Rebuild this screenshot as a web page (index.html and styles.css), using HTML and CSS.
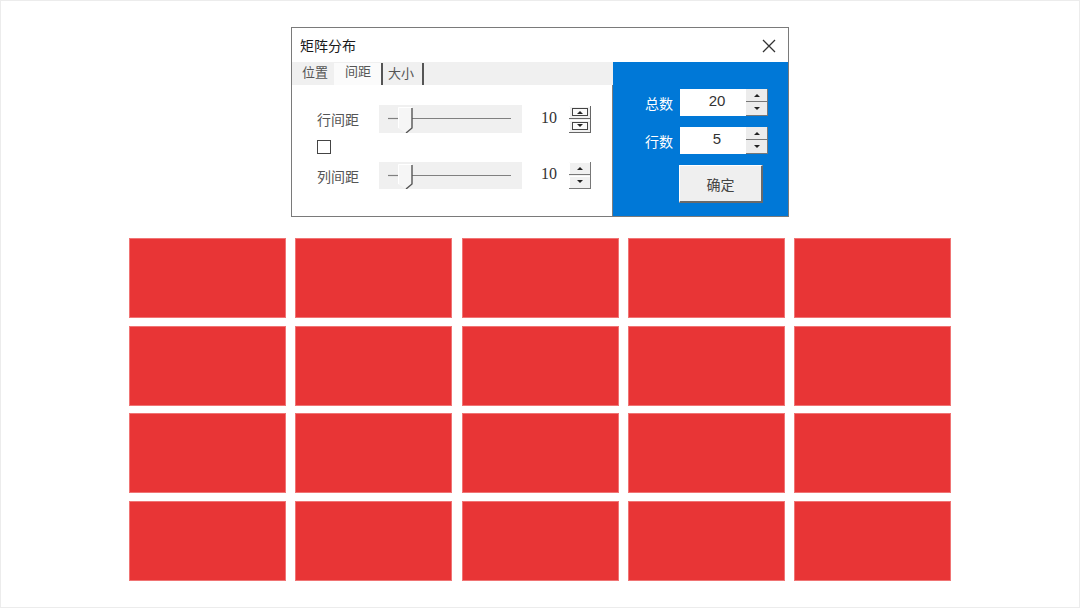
FILE: index.html
```html
<!DOCTYPE html>
<html lang="zh-CN">
<head>
    <meta charset="UTF-8">
    <meta name="viewport" content="width=device-width, initial-scale=1.0">
    <title>矩阵分布</title>
    <link rel="stylesheet" href="styles.css">
</head>
<body>
    <div class="dialog">
        <div class="title-bar">
            <span class="title">矩阵分布</span>
            <svg class="close" width="14" height="14" viewBox="0 0 14 14">
                <path d="M1 1 L13 13 M13 1 L1 13" stroke="#333" stroke-width="1.3" fill="none"/>
            </svg>
        </div>
        <div class="dialog-body">
            <div class="left-panel">
                <div class="tabs">
                    <span class="tab">位置</span>
                    <span class="tab active">间距</span>
                    <span class="tab last">大小</span>
                </div>
                <div class="tab-content">
                    <div class="spacing-row">
                        <span class="row-label">行间距</span>
                        <svg class="slider" width="143" height="28" viewBox="0 0 143 28">
                            <line x1="9" y1="13.5" x2="19" y2="13.5" stroke="#808080" stroke-width="1.2"/>
                            <line x1="33" y1="13.5" x2="132" y2="13.5" stroke="#808080" stroke-width="1.2"/>
                            <path d="M19 2 H33 V23 L27 28 L19 23 Z" fill="#f6f6f6"/>
                            <path d="M19.5 23 V2.5 H33" stroke="#ffffff" fill="none"/>
                            <path d="M33 3 V23 L27 28" stroke="#555" stroke-width="1.4" fill="none"/>
                        </svg>
                        <span class="num-box">10</span>
                        <svg class="spin" width="22" height="27" viewBox="0 0 22 27">
                            <rect x="0" y="0" width="22" height="27" fill="#f0f0f0"/>
                            <path d="M0.5 12.5 V0.5 H21" stroke="#fff" fill="none"/>
                            <path d="M21.5 0 V13 M0 12.5 H22" stroke="#666" fill="none"/>
                            <rect x="3.5" y="2.5" width="15" height="7" stroke="#444" fill="#fafafa"/>
                            <path d="M8 8 H14 L11 5 Z" fill="#222"/>
                            <path d="M0.5 26 V14.5 H21" stroke="#fff" fill="none"/>
                            <path d="M21.5 13 V27 M0 26.5 H22" stroke="#666" fill="none"/>
                            <rect x="3.5" y="16.5" width="15" height="7" stroke="#444" fill="#fafafa"/>
                            <path d="M8 18 H14 L11 21 Z" fill="#222"/>
                        </svg>
                    </div>
                    <span class="checkbox"></span>
                    <div class="spacing-row">
                        <span class="row-label">列间距</span>
                        <svg class="slider" width="143" height="27" viewBox="0 0 143 27">
                            <line x1="9" y1="13.5" x2="19" y2="13.5" stroke="#808080" stroke-width="1.2"/>
                            <line x1="33" y1="13.5" x2="132" y2="13.5" stroke="#808080" stroke-width="1.2"/>
                            <path d="M19 2 H33 V22 L27 27 L19 22 Z" fill="#f6f6f6"/>
                            <path d="M19.5 22 V2.5 H33" stroke="#ffffff" fill="none"/>
                            <path d="M33 3 V22 L27 27" stroke="#555" stroke-width="1.4" fill="none"/>
                        </svg>
                        <span class="num-box">10</span>
                        <svg class="spin" width="22" height="27" viewBox="0 0 22 27">
                            <rect x="0" y="0" width="22" height="27" fill="#f0f0f0"/>
                            <path d="M0.5 12.5 V0.5 H21" stroke="#fff" fill="none"/>
                            <path d="M21.5 0 V13 M0 12.5 H22" stroke="#777" fill="none"/>
                            <path d="M8 8 H14 L11 5 Z" fill="#222"/>
                            <path d="M0.5 26 V14.5 H21" stroke="#fff" fill="none"/>
                            <path d="M21.5 13 V27 M0 26.5 H22" stroke="#777" fill="none"/>
                            <path d="M8 18 H14 L11 21 Z" fill="#222"/>
                        </svg>
                    </div>
                </div>
            </div>
            <div class="blue-panel">
                <div class="count-row">
                    <span class="count-label">总数</span>
                    <span class="count-input">20</span>
                    <svg class="spin" width="22" height="27" viewBox="0 0 22 27">
                        <rect x="0" y="0" width="22" height="27" fill="#ececec"/>
                        <path d="M21.5 0 V13 M0 12.5 H22" stroke="#777" fill="none"/>
                        <path d="M8 8 H14 L11 5 Z" fill="#222"/>
                        <path d="M21.5 13 V27 M0 26.5 H22" stroke="#777" fill="none"/>
                        <path d="M8 18 H14 L11 21 Z" fill="#222"/>
                    </svg>
                </div>
                <div class="count-row">
                    <span class="count-label">行数</span>
                    <span class="count-input">5</span>
                    <svg class="spin" width="22" height="27" viewBox="0 0 22 27">
                        <rect x="0" y="0" width="22" height="27" fill="#ececec"/>
                        <path d="M21.5 0 V13 M0 12.5 H22" stroke="#777" fill="none"/>
                        <path d="M8 8 H14 L11 5 Z" fill="#222"/>
                        <path d="M21.5 13 V27 M0 26.5 H22" stroke="#777" fill="none"/>
                        <path d="M8 18 H14 L11 21 Z" fill="#222"/>
                    </svg>
                </div>
                <button class="ok-button">确定</button>
            </div>
        </div>
    </div>

    <div class="matrix">
        <div class="cell"></div><div class="cell"></div><div class="cell"></div><div class="cell"></div><div class="cell"></div>
        <div class="cell"></div><div class="cell"></div><div class="cell"></div><div class="cell"></div><div class="cell"></div>
        <div class="cell"></div><div class="cell"></div><div class="cell"></div><div class="cell"></div><div class="cell"></div>
        <div class="cell"></div><div class="cell"></div><div class="cell"></div><div class="cell"></div><div class="cell"></div>
    </div>
</body>
</html>
```

FILE: styles.css
```css
body {
    margin: 0;
    width: 1080px;
    height: 608px;
    box-sizing: border-box;
    border: 1px solid #ececec;
    padding-top: 26px;
    background-color: #ffffff;
    font-family: "Noto Sans CJK SC", "Noto Sans", sans-serif;
    display: flex;
    flex-direction: column;
    align-items: center;
}

/* ventana */
.dialog {
    width: 498px;
    height: 190px;
    box-sizing: border-box;
    border: 1px solid #7a7a7a;
    background-color: #ffffff;
    display: flex;
    flex-direction: column;
}

.title-bar {
    height: 34px;
    display: flex;
    align-items: center;
    justify-content: space-between;
    padding: 0 12px 0 8px;
    box-sizing: border-box;
}

.title {
    font-size: 14px;
    color: #1a1a1a;
    line-height: 20px;
}

.close {
    margin-top: 1px;
}

.dialog-body {
    flex: 1;
    display: flex;
}

.left-panel {
    width: 321px;
    display: flex;
    flex-direction: column;
}

.tabs {
    height: 23px;
    background-color: #f0f0f0;
    display: flex;
    padding-left: 4px;
}

.tab {
    font-size: 13px;
    color: #555;
    line-height: 20px;
    padding: 0 6px;
}

.tab.active {
    background-color: #fbfbfb;
    line-height: 16px;
    padding: 0 10px 0 11px;
    border-right: 2px solid #555;
    margin-top: 1px;
}

.tab.last {
    padding: 0 8px 0 5px;
    border-right: 2px solid #555;
    margin-top: 1px;
    line-height: 19px;
}

.tab-content {
    flex: 1;
    box-sizing: border-box;
    border-right: 1px solid #7f7f7f;
    padding: 20px 0 0 25px;
    display: flex;
    flex-direction: column;
    align-items: flex-start;
}

.spacing-row {
    display: flex;
    align-items: center;
}

.row-label {
    width: 62px;
    font-size: 14px;
    color: #555;
}

.slider {
    background-color: #f0f0f0;
    display: block;
}

.num-box {
    width: 45px;
    height: 27px;
    box-sizing: border-box;
    padding-right: 10px;
    text-align: right;
    font-family: "Liberation Serif", serif;
    font-size: 16px;
    line-height: 23px;
    color: #333;
    background-color: #ffffff;
    margin-right: 2px;
}

.spin {
    display: block;
}

.checkbox {
    width: 14px;
    height: 14px;
    box-sizing: border-box;
    border: 1px solid #444;
    margin: 7px 0 8px;
}

/* panel azul */
.blue-panel {
    flex: 1;
    background-color: #0078d7;
    padding: 27px 0 0 32px;
    display: flex;
    flex-direction: column;
    align-items: flex-start;
}

.count-row {
    display: flex;
    align-items: center;
    margin-bottom: 11px;
}

.count-label {
    width: 35px;
    font-size: 14px;
    color: #ffffff;
}

.count-input {
    width: 66px;
    height: 27px;
    box-sizing: border-box;
    padding-left: 8px;
    text-align: center;
    background-color: #ffffff;
    font-family: "Liberation Sans", sans-serif;
    font-size: 15px;
    line-height: 24px;
    color: #333;
}

.ok-button {
    margin: 0 0 0 34px;
    width: 84px;
    height: 38px;
    background-color: #efefef;
    border: none;
    border-top: 1px solid #ffffff;
    border-left: 1px solid #ffffff;
    border-right: 2px solid #6a6a6a;
    border-bottom: 2px solid #6a6a6a;
    font-family: "Noto Sans CJK SC", sans-serif;
    font-size: 14px;
    color: #444;
    padding: 0;
}

/* rectangulos */
.matrix {
    margin-top: 21px;
    width: 822px;
    height: 343px;
    display: grid;
    grid-template-columns: repeat(5, 157px);
    grid-template-rows: repeat(4, 80px);
    justify-content: space-between;
    align-content: space-between;
}

.cell {
    background-color: #e83536;
    border: 1px solid #f07474;
    box-sizing: border-box;
}
```
